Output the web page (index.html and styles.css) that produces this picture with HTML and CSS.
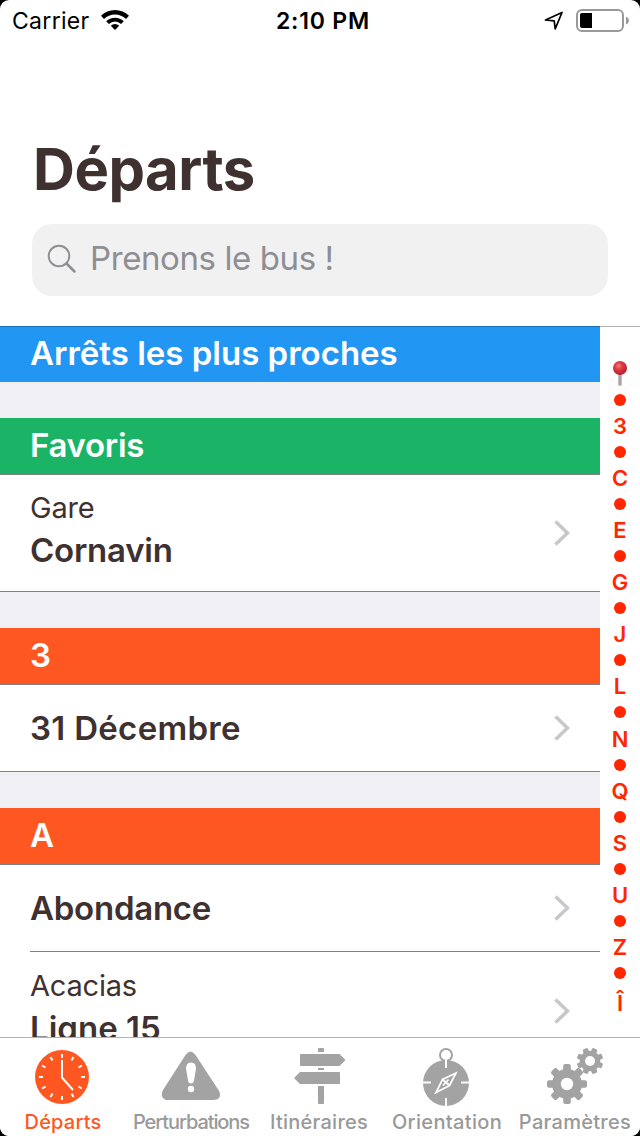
FILE: index.html
```
<!DOCTYPE html>
<html lang="fr">
<head>
<meta charset="utf-8">
<title>Départs</title>
<link rel="stylesheet" href="styles.css">
</head>
<body>
<div class="screen">
  <div class="status">
    <div class="status-left">
      <span class="carrier">Carrier</span>
      <svg class="wifi" width="28" height="20" viewBox="0 0 28 20"><path d="M14 20l-4.200-4.200a6 6 0 0 1 8.400 0z"/><path d="M5.200 11.300a12.500 12.500 0 0 1 17.600 0l-2.700 2.800a8.600 8.600 0 0 0-12.200 0z"/><path d="M0 5.800a19.800 19.800 0 0 1 28 0l-3 3.200a15.600 15.600 0 0 0-22 0z"/></svg>
    </div>
    <span class="time">2:10 PM</span>
    <div class="status-right">
      <svg class="locate" width="20" height="20" viewBox="0 0 20 20"><path d="M1.500 9L18 1.500L11.200 17.800L10.200 9.800Z" fill="none" stroke="#000" stroke-width="1.700" stroke-linejoin="round"/></svg>
      <svg class="battery" width="54" height="24" viewBox="0 0 54 24"><rect x="1" y="1" width="46" height="21" rx="5" fill="none" stroke="#999" stroke-width="2"/><path d="M4 6q0-2 2-2h10v15H6q-2 0-2-2z"/><path d="M50 7.500q3 1.500 3 4t-3 4z" fill="#999"/></svg>
    </div>
  </div>
  <header class="header">
    <h1 class="title">Départs</h1>
    <div class="search">
      <svg width="30" height="30" viewBox="0 0 30 30" fill="none" stroke="#8e8e93"><circle cx="12" cy="12" r="10.300" stroke-width="1.900"/><path d="M19.500 19.500L27.500 27.500" stroke-width="2.500" stroke-linecap="round"/></svg>
      <span class="placeholder">Prenons le bus !</span>
    </div>
  </header>
  <div class="content">
    <main class="list">
      <h2 class="section near">Arrêts les plus proches</h2>
      <div class="gap"></div>
      <h2 class="section fav">Favoris</h2>
      <div class="row tall lined"><div class="label"><span class="sub">Gare</span><span class="name tight">Cornavin</span></div><svg class="chev" viewBox="0 0 16 26"><path d="M1.500 1.500L13.500 13L1.500 24.500"/></svg></div>
      <div class="gap"></div>
      <h2 class="section alpha">3</h2>
      <div class="row lined"><div class="label"><span class="name wide">31 Décembre</span></div><svg class="chev" viewBox="0 0 16 26"><path d="M1.500 1.500L13.500 13L1.500 24.500"/></svg></div>
      <div class="gap"></div>
      <h2 class="section alpha">A</h2>
      <div class="row inset"><div class="label"><span class="name tight">Abondance</span></div><svg class="chev" viewBox="0 0 16 26"><path d="M1.500 1.500L13.500 13L1.500 24.500"/></svg></div>
      <div class="row tall"><div class="label"><span class="sub">Acacias</span><span class="name">Ligne 15</span></div><svg class="chev" viewBox="0 0 16 26"><path d="M1.500 1.500L13.500 13L1.500 24.500"/></svg></div>
    </main>
    <nav class="index">
      <svg class="pin" width="16" height="26" viewBox="0 0 16 26"><defs><radialGradient id="ball" cx=".4" cy=".35" r=".65"><stop offset="0" stop-color="#f48080"/><stop offset=".4" stop-color="#e03a45"/><stop offset="1" stop-color="#b51f2d"/></radialGradient></defs><path d="M6.500 12h3v12.500h-3z" fill="#8b8380"/><path d="M7.500 13h1v11.500h-1z" fill="#c9c4c1"/><circle cx="8" cy="7" r="7" fill="url(#ball)"/></svg>
      <i></i><span>3</span><i></i><span>C</span><i></i><span>E</span><i></i><span>G</span><i></i><span>J</span><i></i><span>L</span><i></i><span>N</span><i></i><span>Q</span><i></i><span>S</span><i></i><span>U</span><i></i><span>Z</span><i></i><span class="last">Î</span>
    </nav>
  </div>
  <footer class="tabs">
    <div class="tab active">
      <svg viewBox="0 0 60 60"><circle cx="30" cy="30" r="27" fill="#ff5722"/><g stroke="#fff" stroke-width="2"><path d="M30 7v4M30 49v4M7 30h4M49 30h4M18.500 10.100l2 3.400M39.500 46.500l2 3.400M41.500 10.100l-2 3.400M20.500 46.500l-2 3.400M10.100 18.500l3.400 2M46.500 39.500l3.400 2M49.900 18.500l-3.400 2M13.500 39.500l-3.400 2"/><path d="M30 13v17.500L41 43" fill="none"/></g></svg>
      <span class="t1">Départs</span>
    </div>
    <div class="tab">
      <svg viewBox="0 0 60 60"><g transform="translate(.5 1.500)"><path d="M24 6.500q5-7 10 0L57 41.500c3.500 6 .5 10-4.500 10H6.500c-5 0-8-4-5-10z"/><path d="M24.500 20q0-6 5-6t5 6l-2 12q-.4 3-3 3t-3-3z" fill="#fff"/><circle cx="29.500" cy="40.500" r="3.200" fill="#fff"/></g></svg>
      <span class="t2">Perturbations</span>
    </div>
    <div class="tab signs">
      <svg viewBox="0 0 60 60"><path d="M29 2q0-1 1-1h4q1 0 1 1v3h-6zM12 7h38.500l6 6-6 6H12q-1 0-1-1V8q0-1 1-1zM29 21h6v2h-6zM11 25h39q1 0 1 1v10q0 1-1 1H11l-6-6zM29 39h6v17q0 1-1 1h-4q-1 0-1-1z"/></svg>
      <span class="t3">Itinéraires</span>
    </div>
    <div class="tab compass">
      <svg viewBox="0 0 60 60"><circle cx="29" cy="36" r="23"/><circle cx="29" cy="8" r="6" fill="#fff" stroke="#a3a3a3" stroke-width="2"/><path d="M29 13v8M29 51v8M6 35.500h8M44 35.500h8" fill="none" stroke="#fff" stroke-width="2"/><path d="M39 26L32.500 38.500L19 45.500L25.500 32.500ZM25.500 32.500L32.500 38.500M26 38.500L31.500 32.500" fill="none" stroke="#fff" stroke-width="1.700"/></svg>
      <span class="t4">Orientation</span>
    </div>
    <div class="tab">
      <svg viewBox="0 0 60 60"><g transform="translate(22 37)"><circle r="15"/><g id="g"><rect x="-3.800" y="-20" width="7.600" height="40" rx="2"/><rect x="-20" y="-3.800" width="40" height="7.600" rx="2"/></g><use href="#g" transform="rotate(45)"/><circle r="6.200" fill="#fff"/></g><g transform="translate(45 14)"><circle r="10.300"/><g transform="rotate(22.500)"><g id="h"><rect x="-2.800" y="-13.300" width="5.600" height="26.600" rx="1.500"/><rect x="-13.300" y="-2.800" width="26.600" height="5.600" rx="1.500"/></g><use href="#h" transform="rotate(45)"/></g><circle r="5" fill="#fff"/></g></svg>
      <span class="t5">Paramètres</span>
    </div>
  </footer>
</div>
</body>
</html>
```
FILE: styles.css
```
* { box-sizing: border-box; margin: 0; padding: 0; }
body { background: #000; font-family: Inter, "Liberation Sans", sans-serif; color: #3e312f; }
.screen { width: 640px; height: 1136px; background: #fff; border-radius: 9px; overflow: hidden; display: flex; flex-direction: column; }
svg { display: block; flex: none; }
span { white-space: nowrap; }
.status { height: 40px; flex: none; display: grid; grid-template-columns: 1fr auto 1fr; color: #000; font-size: 23px; line-height: 42px; }
.status-left { display: flex; padding-left: 12px; }
.carrier { width: 89px; letter-spacing: .3px; }
.wifi { margin-top: 10px; }
.time { font-weight: 600; letter-spacing: .8px; padding-left: 6px; }
.status-right { display: flex; justify-content: flex-end; padding-right: 10px; }
.locate { margin: 11px 12px 0 0; }
.battery { margin-top: 9px; }
.header { height: 286px; flex: none; padding: 94px 32px 0; display: flex; flex-direction: column; }
.title { font-size: 58px; line-height: 70px; height: 90px; font-weight: 700; letter-spacing: -.5px; padding-left: 1px; }
.search { height: 72px; border-radius: 20px; background: #f1f1f1; display: flex; align-items: center; padding-left: 15px; gap: 13px; color: #8e8e93; font-size: 33px; }
.search svg { margin-bottom: 2px; }
.placeholder { letter-spacing: -.4px; padding-bottom: 4px; }
.content { flex: 1; min-height: 0; display: flex; }
.list { width: 600px; overflow: hidden; display: flex; flex-direction: column; }
.section { height: 57px; flex: none; border-bottom: 1px solid #808080; padding-left: 30px; color: #fff; font-size: 33px; line-height: 55px; font-weight: 600; letter-spacing: -.3px; }
.near { background: #2196f3; border-top: 1px solid #1a6eb3; border-bottom: 0; height: 56px; line-height: 53px; letter-spacing: 0; }
.fav { background: #1bb466; }
.alpha { background: #ff5722; }
.gap { height: 36px; flex: none; background: #efeff4; }
.row { height: 87px; flex: none; display: flex; align-items: center; justify-content: space-between; padding: 0 30px; background: #fff; }
.row:not(.tall) { padding-bottom: 1px; }
.tall { height: 117px; }
.tall .label { padding-bottom: 8px; }
.lined { border-bottom: 1px solid #808080; }
.inset { background: linear-gradient(#808080, #808080) 30px 100% / 570px 1px no-repeat #fff; }
.row.inset { padding-bottom: 2px; }
.label { display: flex; flex-direction: column; }
.name { font-size: 33px; line-height: 42px; font-weight: 600; }
.tight { letter-spacing: -.25px; }
.wide { letter-spacing: .3px; }
.sub { font-size: 29px; line-height: 42px; letter-spacing: -.2px; }
.chev { width: 16px; height: 26px; fill: none; stroke: #c7c7cc; stroke-width: 3.500; }
.index { width: 40px; border-top: 1px solid #b2b2b2; padding-top: 34px; display: flex; flex-direction: column; align-items: center; color: #ff2600; font-size: 22px; line-height: 26.050px; font-weight: 600; }
.index span { height: 26.050px; flex: none; }
.index i { width: 12px; height: 12px; margin: 7.025px 0; border-radius: 50%; background: #ff2600; flex: none; }
.index .last { line-height: 34px; }
.tabs { height: 99px; flex: none; border-top: 1px solid #b2b2b2; display: grid; grid-template-columns: repeat(5, 1fr); background: #fff; }
.tab { display: flex; flex-direction: column; align-items: center; color: #999; font-size: 20px; font-weight: 500; line-height: 28px; padding: 9px 2px 0 0; }
.tab svg { width: 60px; height: 60px; fill: #a3a3a3; margin-bottom: 1px; }
.tab.active { color: #ff5722; padding-right: 4px; }
.tab.signs { padding-right: 2px; }
.tab.compass { padding-right: 2px; }
.t1 { letter-spacing: .2px; padding-left: 2px; }
.t2 { letter-spacing: -1.080px; }
.t3 { letter-spacing: .25px; }
.t4 { letter-spacing: .35px; }
.t5 { letter-spacing: .3px; }
```
